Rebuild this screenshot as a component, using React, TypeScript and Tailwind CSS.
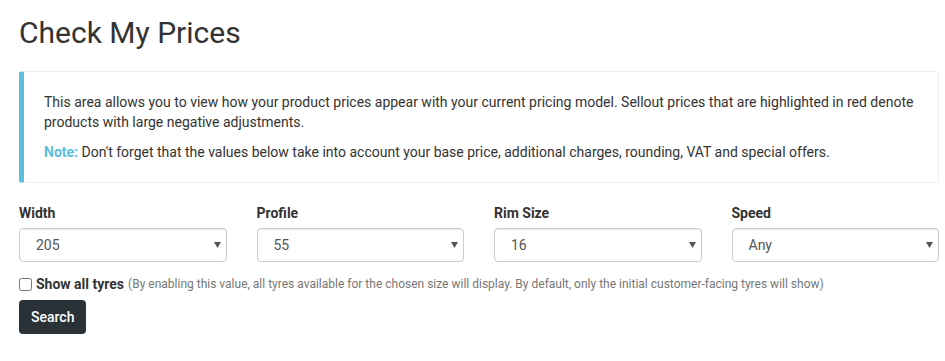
import { ChangeEvent, useState } from 'react'

const selects = [
  { label: 'Width', value: '205', options: ['175', '185', '195', '205', '215', '225'] },
  { label: 'Profile', value: '55', options: ['45', '50', '55', '60', '65'] },
  { label: 'Rim Size', value: '16', options: ['15', '16', '17', '18'] },
  { label: 'Speed', value: 'Any', options: ['Any', 'H', 'V', 'W', 'Y'] },
]

function SelectBox({ label, value, options }: { label: string; value: string; options: string[] }) {
  const [current, setCurrent] = useState(value)
  return (
    <div>
      <label className="mb-[5px] block text-[14px] leading-[20px] font-bold text-[#333]">{label}</label>
      <div className="relative">
        <select
          value={current}
          onChange={(e: ChangeEvent<HTMLSelectElement>) => setCurrent(e.target.value)}
          className="h-[34px] w-full appearance-none rounded-[4px] border border-[#ccc] bg-white pl-[16px] pr-6 text-[14px] text-[#555] shadow-[inset_0_1px_1px_rgba(0,0,0,0.075)] outline-none"
        >
          {options.map((o) => (
            <option key={o}>{o}</option>
          ))}
        </select>
        <svg
          className="pointer-events-none absolute right-[6px] top-[14px]"
          width="7"
          height="6"
          viewBox="0 0 7 6"
        >
          <path d="M0 0h7L3.5 6z" fill="#555" />
        </svg>
      </div>
    </div>
  )
}

export default function App() {
  return (
    <div className="min-h-[361px] bg-white font-['Roboto',sans-serif] text-[#333]">
      <div className="ml-[19px] w-[920px] pt-[16px]">
        {/* Header */}
        <h1 className="text-[30px] leading-[1.1] font-normal text-[#333]">Check My Prices</h1>

        {/* Callout */}
        <div className="mt-[22px] rounded-[3px] border border-l-[5px] border-[#eee] border-l-[#5bc0de] p-[20px] text-[14px] leading-[20px]">
          <p className="mb-[10px]">
            This area allows you to view how your product prices appear with your current pricing model. Sellout
            prices that are highlighted in red denote products with large negative adjustments.
          </p>
          <p>
            <span className="font-bold text-[#5bc0de]">Note:</span> Don't forget that the values below take into
            account your base price, additional charges, rounding, VAT and special offers.
          </p>
        </div>

        {/* Filters */}
        <div className="mt-[20px] grid grid-cols-4 gap-x-[30px]">
          {selects.map((s) => (
            <SelectBox key={s.label} {...s} />
          ))}
        </div>

        <div className="mt-[12px] flex items-center">
          <input type="checkbox" className="m-0 h-[13px] w-[13px]" />
          <span className="ml-[4px] text-[14px] leading-[20px] font-bold text-[#333]">Show all tyres</span>
          <span className="ml-[4px] text-[12px] text-[#777]">
            (By enabling this value, all tyres available for the chosen size will display. By default, only the
            initial customer-facing tyres will show)
          </span>
        </div>

        <button
          type="button"
          className="mt-[6px] h-[34px] rounded-[4px] bg-[#2a3137] px-[12px] text-[14px] font-medium text-white"
        >
          Search
        </button>
      </div>
    </div>
  )
}
